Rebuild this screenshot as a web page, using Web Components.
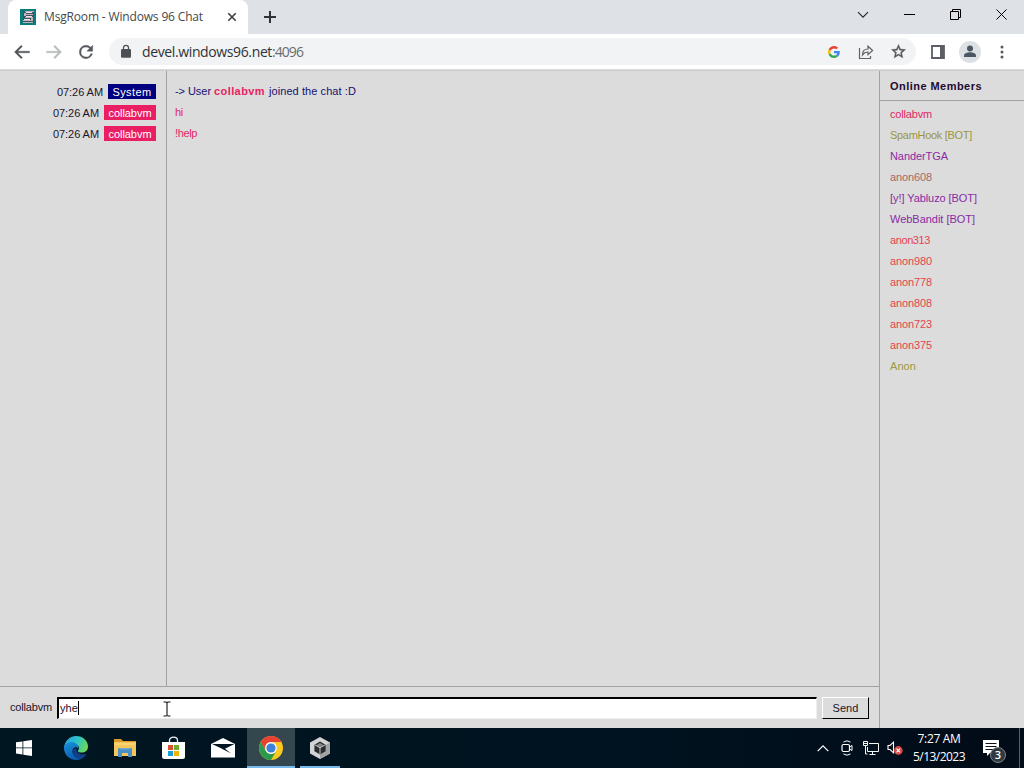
<!DOCTYPE html>
<html lang="en">
<head>
<meta charset="utf-8">
<title>MsgRoom - Windows 96 Chat</title>
<style>
html,body{margin:0;width:1024px;height:768px;overflow:hidden;background:#dcdcdc}
</style>
</head>
<body>
<desktop-screen></desktop-screen>
<script>
function define(name, html, setup) {
  const tpl = document.createElement('template');
  tpl.innerHTML = html;
  customElements.define(name, class extends HTMLElement {
    connectedCallback() {
      if (this.shadowRoot) return;
      const root = this.attachShadow({ mode: 'open' });
      root.appendChild(tpl.content.cloneNode(true));
      if (setup) setup(this, root);
    }
  });
}

/* A text run tracked so that it takes the width given in "w". */
customElements.define('fit-text', class extends HTMLElement {
  connectedCallback() {
    if (this.shadowRoot) return;
    const root = this.attachShadow({ mode: 'open' });
    root.innerHTML = '<style>:host{display:inline-block;white-space:pre;flex:none}span{display:inline-block}</style><span></span>';
    const span = root.querySelector('span');
    const text = this.getAttribute('text');
    span.textContent = text;
    const w = +this.getAttribute('w');
    const natural = span.getBoundingClientRect().width;
    if (w && natural) {
      const gap = (w - natural) / text.length;
      span.style.letterSpacing = gap + 'px';
      this.style.width = w + 'px';
    }
  }
});

const ICONS = {
  site: ['0 0 16 16', '<path fill="#087d7c" d="M0 0h16v16H0z"/><path fill="#3b5564" d="M3 2h11v12H3z"/><path fill="#c9aeba" d="M5 2h9v1H5zM4 4h2v3H4zM6 5h7v1H6zM5 8h8v1H5zM11 9h2v3h-2zM3 11h8v1H3zM3 13h10v1H3z"/><path fill="#eee4ea" d="M6 3h6v1H6zM6 7h6v1H6zM4 10h6v1H4z"/>'],
  close: ['0 0 10 10', '<path d="M1.3 1.3l7.4 7.4M8.7 1.3L1.3 8.7" stroke="#3c4043" stroke-width="1.6" fill="none"/>'],
  plus: ['0 0 12 12', '<path d="M6 0v12M0 6h12" stroke="#303338" stroke-width="2" fill="none"/>'],
  tabs: ['0 0 12 8', '<path d="M1 1.2l5 5 5-5" stroke="#222" stroke-width="1.1" fill="none"/>'],
  min: ['0 0 11 11', '<path d="M0 5.5h11" stroke="#000" fill="none"/>'],
  restore: ['0 0 11 11', '<path d="M.5 2.5h8v8h-8zM2.5 2.5v-2h8v8h-2" stroke="#000" fill="none"/>'],
  x: ['0 0 11 11', '<path d="M.5.5l10 10M10.500.5l-10 10" stroke="#000" fill="none"/>'],
  back: ['0 0 24 24', '<path fill="currentColor" stroke="currentColor" stroke-width=".4" d="M21 11H6.83l5.59-5.59L11 4l-8 8 8 8 1.41-1.41L6.83 13H21z"/>'],
  fwd: ['0 0 24 24', '<path fill="currentColor" stroke="currentColor" stroke-width=".4" d="M3 11h14.170l-5.590-5.590L13 4l8 8-8 8-1.410-1.410L17.170 13H3z"/>'],
  reload: ['0 0 24 24', '<path fill="#55585c" d="M17.650 6.350A7.960 7.960 0 0 0 12 4a8 8 0 1 0 7.730 10h-2.080A6 6 0 1 1 12 6c1.660 0 3.140.69 4.220 1.780L13 11h7V4z" stroke="#55585c" stroke-width=".5"/>'],
  lock: ['0 0 24 24', '<path fill="#4d5155" d="M18 8h-1V6A5 5 0 0 0 7 6v2H6a2 2 0 0 0-2 2v10c0 1.100.9 2 2 2h12a2 2 0 0 0 2-2V10a2 2 0 0 0-2-2zM9 6a3 3 0 0 1 6 0v2H9z"/>'],
  google: ['0 0 48 48', '<path fill="#EA4335" d="M24 9.500c3.540 0 6.710 1.220 9.210 3.600l6.850-6.850C35.900 2.380 30.470 0 24 0 14.620 0 6.510 5.380 2.560 13.220l7.980 6.190C12.430 13.720 17.740 9.500 24 9.500z"/><path fill="#4285F4" d="M46.980 24.550c0-1.570-.15-3.090-.38-4.550H24v9.020h12.940c-.58 2.960-2.260 5.480-4.780 7.180l7.730 6c4.510-4.180 7.090-10.360 7.090-17.650z"/><path fill="#FBBC05" d="M10.530 28.590a14.500 14.500 0 0 1 0-9.180l-7.980-6.190a24 24 0 0 0 0 21.560z"/><path fill="#34A853" d="M24 48c6.480 0 11.930-2.130 15.890-5.810l-7.730-6c-2.150 1.450-4.920 2.300-8.160 2.300-6.260 0-11.570-4.220-13.470-9.910l-7.980 6.190C6.510 42.620 14.620 48 24 48z"/>'],
  share: ['0 0 16 16', '<path d="M1.500 4v10.500h11V12M4.500 11c0-4 2-6 5.500-6V2.200L14.600 6.500 10 10.600V8c-2.500 0-4.200 1-5.500 3z" stroke="#5f6368" stroke-width="1.200" fill="none"/>'],
  star: ['0 0 24 24', '<path fill="#4f5357" d="M22 9.240l-7.190-.62L12 2 9.190 8.630 2 9.240l5.460 4.730L5.820 21 12 17.270 18.180 21l-1.630-7.030zM12 15.400l-3.760 2.270 1-4.280-3.320-2.880 4.380-.38L12 6.100l1.710 4.040 4.380.38-3.320 2.880 1 4.280z" stroke="#4f5357" stroke-width=".5"/>'],
  panel: ['0 0 14 14', '<path d="M1 1h12v12H1z" fill="#fff" stroke="#5b5f63" stroke-width="1.800"/><path d="M9 1h4v12H9z" fill="#5b5f63"/>'],
  avatar: ['0 0 22 22', '<circle cx="11" cy="11" r="11" fill="#dde1e5"/><circle cx="11" cy="7.500" r="3" fill="#4b5863"/><path d="M5 16v-1.500c0-2 3.500-3.200 6-3.200s6 1.200 6 3.200V16z" fill="#4b5863"/>'],
  dots: ['0 0 4 14', '<g fill="#55585c"><circle cx="2" cy="2" r="1.500"/><circle cx="2" cy="7" r="1.500"/><circle cx="2" cy="12" r="1.500"/></g>'],
  windows: ['0 0 16 16', '<path fill="#fff" d="M0 2.300l6.500-.9v6H0zM7.300 1.300L16 0v7.400H7.300zM0 8.300h6.500v6.200L0 13.600zM7.300 8.300H16V16l-8.700-1.300z"/>'],
  edge: ['0 0 24 24', '<defs><linearGradient id="a" x1="0" y1=".2" x2="1" y2=".5"><stop stop-color="#259fe0"/><stop offset=".5" stop-color="#2bc1cc"/><stop offset="1" stop-color="#69d957"/></linearGradient><linearGradient id="b" x1="0" y1="0" x2=".5" y2="1"><stop stop-color="#1993dc"/><stop offset="1" stop-color="#0b58ad"/></linearGradient></defs><path fill="url(#a)" d="M0 12C.5 5 5.500 0 12 0c7 0 12 5 12 10.500 0 4-3 6.100-6.300 6.100-3 0-4.200-1.200-3.600-2.100 1-1.500 1.200-2.900.3-4.200C11.500 6 3.800 6.400 0 12z"/><path fill="url(#b)" d="M0 12c1-5.500 7.300-7.500 11.600-4.700 2.500 1.700 3.300 3.700 2.400 5.100-1.800-2-5-1-5.500 2.200-.7 5 5.200 8.400 10 6.400l2.700-1.200C19.200 22.500 15.800 24 12 24 5.300 24 0 18.600 0 12z"/><path fill="#103f86" d="M8.700 14.500c.7-1.800 2.500-2.600 4-2.200-1.300 4.200 3.800 7.400 9.500 5.400 0 2.500-4 5.200-7.700 4.700-4-.5-6.300-4-5.800-7.900z"/>'],
  folder: ['0 0 22 20', '<path fill="#d99b25" d="M0 1h7l2 2h13v4H0z"/><path fill="#f4c65b" d="M0 4h22v14H0z"/><path fill="#fbd574" d="M1 5h20v2H1z"/><path fill="#4a8fc6" d="M4 11.500c0-1 .8-1.500 1.500-1.500h11c1 0 1.500.7 1.500 1.500V19h-4v-4H8v4H4z"/><path fill="#70a8cf" d="M5.500 10h11l-1 1.400h-9z"/>'],
  store: ['0 0 23 24', '<path d="M7.500 7V4.500C7.500 0 15.500 0 15.500 4.500V7" fill="none" stroke="#eef5f9" stroke-width="1.300"/><path fill="#fff" d="M0 6h23v14.500a2.500 2.500 0 0 1-2.500 2.500h-18A2.500 2.500 0 0 1 0 20.500z"/><path fill="#d9532f" d="M6 9h5v5H6z"/><path fill="#71ad2e" d="M12 9h5v5h-5z"/><path fill="#179fd5" d="M6 15h5v5H6z"/><path fill="#f1b400" d="M12 15h5v5h-5z"/>'],
  mail: ['0 0 24 20', '<path fill="#fff" d="M0 6l12-6 12 6v13.500H0z"/><path fill="#001622" d="M1 6h22.500L14 10.800l6 4.700L9.500 10z"/>'],
  chrome: ['0 0 24 24', '<circle cx="12" cy="12" r="12" fill="#f9c920"/><path fill="#e64335" d="M1.610 6A12 12 0 0 1 22.400 6H12a6 6 0 0 0-5.200 9z"/><path fill="#299b4c" d="M1.610 6A12 12 0 0 0 12 24l5.200-9A6 6 0 0 1 6.800 15z"/><circle cx="12" cy="12" r="5.900" fill="#f5f8fd"/><circle cx="12" cy="12" r="4.600" fill="#3e81dc"/>'],
  cube: ['0 0 20 22', '<path fill="#d4d4d4" d="M10 0l10 5.500v11L10 22 0 16.500v-11z"/><path fill="#a4a4a4" d="M10 11l10-5.500v11L10 22z"/><path fill="#2b2d2f" d="M10 4.500l5.600 3.200v6.600L10 17.500l-5.600-3.200V7.700z"/><path fill="#85888a" d="M10 6l3.800 2.200L10 10.300 6.200 8.200z"/><path stroke="#c9c9c9" fill="none" d="M10 17v-6.200L4.800 7.800M10 10.800l5.200-3"/>'],
  up: ['0 0 12 7', '<path d="M.7 6.200L6 .9l5.300 5.300" fill="none" stroke="#fff" stroke-width="1.200"/>'],
  meet: ['0 0 12 16', '<g fill="none" stroke="#fff"><path d="M2.500 2Q6-.3 9.500 2M2.500 14Q6 16.300 9.500 14"/><rect x="1" y="4.500" width="7.500" height="7" rx="1.500" stroke-width="1.200"/><path d="M8.500 7l2.500-1.500v5L8.500 9"/></g>'],
  net: ['0 0 16 14', '<g fill="none" stroke="#f3f6f8"><path d="M6 2.500h9.500v8H4.500V6M9.500 10.500v3M6.500 13.500h6"/><path d="M.5.500h4v4h-4zM.5 2.500h4M2.500 4.500v8.500h2"/></g>'],
  sound: ['0 0 16 14', '<path d="M1 4.500h2l3.500-3.300v10.600L3 8.500H1z" fill="none" stroke="#fff" stroke-width="1.100"/><circle cx="11.300" cy="9.500" r="4.400" fill="#d54744"/><path d="M9.500 7.700l3.600 3.600M13.100 7.700l-3.600 3.600" stroke="#fff" stroke-width="1.200"/>'],
  note: ['0 0 16 16', '<path fill="#fff" d="M0 0h16v13H7l-3 3v-3H0z"/><path stroke="#061421" stroke-width="1.100" d="M2.500 3.500h11M2.500 6.500h11M2.500 9.500h8"/>'],
  ibeam: ['0 0 8 16', '<path d="M.5 1h2.500l1 .6 1-.6h2.500M4 1.500v13M.5 15h2.500l1-.6 1 .6h2.500" stroke="#111" fill="none" stroke-width="1.100"/>']
};
customElements.define('ui-icon', class extends HTMLElement {
  connectedCallback() {
    if (this.shadowRoot) return;
    const [vb, body] = ICONS[this.getAttribute('name')];
    const w = this.getAttribute('w'), h = this.getAttribute('h') || w;
    this.attachShadow({ mode: 'open' }).innerHTML =
      `<style>:host{display:block;flex:none;width:${w}px;height:${h}px}svg{display:block}</style><svg width="${w}" height="${h}" viewBox="${vb}">${body}</svg>`;
  }
});

define('tab-strip', `<style>
:host{display:flex;height:34px;background:#dee1e6;box-sizing:border-box;padding-left:8px;font:12px "Open Sans","Noto Sans",sans-serif;color:#45484c}
.tab{width:240px;height:34px;box-sizing:border-box;background:#fff;border-radius:8px 8px 0 0;display:flex;align-items:center;padding:0 11px 1px 12px}
.tab fit-text{margin-left:8px}
.tab .c{margin-left:auto}
.new{margin:11px 0 0 16px}
.win{margin-left:auto;display:flex;height:29px}
.win span{width:46px;display:flex;align-items:center;justify-content:center}
</style>
<div class="tab"><ui-icon name="site" w="16"></ui-icon><fit-text text="MsgRoom - Windows 96 Chat" w="159"></fit-text><ui-icon class="c" name="close" w="10"></ui-icon></div>
<ui-icon class="new" name="plus" w="12"></ui-icon>
<div class="win"><span><ui-icon name="tabs" w="12" h="8"></ui-icon></span><span><ui-icon name="min" w="11"></ui-icon></span><span><ui-icon name="restore" w="11"></ui-icon></span><span><ui-icon name="x" w="11"></ui-icon></span></div>`);

define('nav-bar', `<style>
:host{display:flex;align-items:center;height:36px;box-sizing:border-box;background:#fff;border-bottom:1px solid #dadada;padding:0 6px;font:14px "Open Sans","Noto Sans",sans-serif;color:#303236}
.b{width:32px;display:flex;justify-content:center;color:#4f5256}
.off{color:#b6b8ba}
.box{width:807px;height:27px;margin:0 6px 0 7px;box-sizing:border-box;border-radius:14px;background:#f1f3f4;display:flex;align-items:center;padding:0 2px 0 9px}
.box>ui-icon{margin-right:8px}
.port{color:#696d71}
.r{margin-left:auto;display:flex;align-items:center}
</style>
<span class="b"><ui-icon name="back" w="20"></ui-icon></span><span class="b off"><ui-icon name="fwd" w="20"></ui-icon></span><span class="b"><ui-icon name="reload" w="20"></ui-icon></span>
<div class="box"><ui-icon name="lock" w="16" h="15"></ui-icon><fit-text text="devel.windows96.net" w="130"></fit-text><fit-text class="port" text=":4096" w="31"></fit-text>
<div class="r"><span class="b"><ui-icon name="google" w="12"></ui-icon></span><span class="b"><ui-icon name="share" w="16"></ui-icon></span><span class="b"><ui-icon name="star" w="17"></ui-icon></span></div></div>
<span class="b"><ui-icon name="panel" w="14"></ui-icon></span><span class="b"><ui-icon name="avatar" w="22"></ui-icon></span><span class="b"><ui-icon name="dots" w="4" h="14"></ui-icon></span>`);

define('chat-stamp', `<style>
:host{display:flex;justify-content:flex-end;align-items:center;height:21px}
.tag{height:15px;display:flex;align-items:center;justify-content:center;color:#fff;margin-left:5px}
</style><fit-text text="07:26 AM" w="46"></fit-text><span class="tag"></span>`, (el, root) => {
  const t = root.querySelector('.tag');
  const sys = el.getAttribute('user') === 'System';
  t.style.background = sys ? '#000080' : '#e91e63';
  t.style.width = sys ? '48px' : '52px';
  t.innerHTML = `<fit-text text="${el.getAttribute('user')}" w="${sys ? 39 : 43}"></fit-text>`;
});

define('chat-log', `<style>
:host{display:flex;height:615px}
.l{width:166px;box-sizing:border-box;padding:10px 10px 0 0}
.m{flex:1;border-left:1px solid #a2a2a2;padding:9px 0 0 8px;color:#e02a62}
.m div{display:flex;height:21px;align-items:center}
.m .sys{color:#17106f}
b{color:#e91e63;margin:0 4px 0 3px}
</style>
<div class="l"><chat-stamp user="System"></chat-stamp><chat-stamp user="collabvm"></chat-stamp><chat-stamp user="collabvm"></chat-stamp></div>
<div class="m"><div class="sys"><fit-text text="-&gt; User" w="36"></fit-text><b><fit-text text="collabvm" w="51"></fit-text></b><fit-text text="joined the chat :D" w="87"></fit-text></div><div><fit-text text="hi" w="8"></fit-text></div><div><fit-text text="!help" w="22"></fit-text></div></div>`);

define('chat-input', `<style>
:host{display:flex;height:42px;box-sizing:border-box;border-top:1px solid #a2a2a2;padding:10px 10px 0 10px;color:#21142a}
.n{margin:3px 5px 0 0}
.f{width:760px;height:22px;box-sizing:border-box;background:#fff;border:2px solid;border-color:#000 #eee #eee #000;border-right-width:1px;border-bottom-width:1px;display:flex;align-items:center;padding:0 0 1px 1px;position:relative}
.caret{width:1px;height:14px;background:#000}
.f ui-icon{position:absolute;left:104px;top:2px}
.s{width:47px;height:22px;margin-left:5px;box-sizing:border-box;border:1px solid;border-color:#fff #000 #000 #fff;background:#dcdcdc;display:flex;align-items:center;justify-content:center}
</style>
<fit-text class="n" text="collabvm" w="42"></fit-text><div class="f"><fit-text text="yhe" w="18"></fit-text><span class="caret"></span><ui-icon name="ibeam" w="8" h="16"></ui-icon></div><div class="s"><fit-text text="Send" w="26"></fit-text></div>`);

define('member-list', `<style>
:host{display:block;width:145px;box-sizing:border-box;border-left:1px solid #a2a2a2}
h2{margin:0;height:30px;box-sizing:border-box;border-bottom:1px solid #a2a2a2;padding:0 0 0 10px;display:flex;align-items:center;font-size:11px;font-weight:bold;color:#230b30}
ul{list-style:none;margin:0;padding:2px 0 0 10px}
li{height:21px;display:flex;align-items:center}
</style><h2><fit-text text="Online Members" w="92"></fit-text></h2><ul></ul>`, (el, root) => {
  root.querySelector('ul').innerHTML = [
    ['collabvm', 42, '#e02862'], ['SpamHook [BOT]', 82, '#9b9641'], ['NanderTGA', 58, '#892aa4'],
    ['anon608', 42, '#a86767'], ['[y!] Yabluzo [BOT]', 87, '#892aa4'], ['WebBandit [BOT]', 85, '#892aa4'],
    ['anon313', 40, '#e54450'], ['anon980', 42, '#e54450'], ['anon778', 42, '#e54450'],
    ['anon808', 42, '#e54450'], ['anon723', 42, '#e54450'], ['anon375', 42, '#e54450'], ['Anon', 26, '#999943']
  ].map(([n, w, c]) => `<li style="color:${c}"><fit-text text="${n}" w="${w}"></fit-text></li>`).join('');
});

define('msg-room', `<style>
:host{display:flex;height:658px;box-sizing:border-box;border-top:1px solid #cecece;background:#dcdcdc;font:11px/14px "Liberation Sans",Arial,sans-serif;color:#21142a}
.main{width:879px}
</style><div class="main"><chat-log></chat-log><chat-input></chat-input></div><member-list></member-list>`);

define('task-bar', `<style>
:host{display:flex;height:40px;background:linear-gradient(90deg,#001621,#001320 60%,#020b18);font:12px/18px "Open Sans","Noto Sans",sans-serif;color:#fff}
.a{width:49px;box-sizing:border-box;display:flex;align-items:center;justify-content:center}
.start{width:51px;padding-right:3px}
.on{width:48px;margin-right:1px;background:#34474f;box-shadow:inset 0 -2px #76b9ed}
.run{width:40px;margin-left:4px;box-shadow:inset 0 -2px #76b9ed}
.tray{margin-left:auto;display:flex;align-items:center}
.time{width:62px;margin:0 0 0 5px;display:flex;flex-direction:column;align-items:center}
.n{position:relative;margin:0 20px 0 13px}
.badge{position:absolute;left:7px;top:7px;width:16px;height:16px;box-sizing:border-box;border-radius:50%;border:1px solid #7c848a;background:#303940;font:600 11px/14px "Open Sans",sans-serif;text-align:center}
.end{width:1px;height:40px;background:#59616a;margin-right:4px}
</style>
<span class="a start"><ui-icon name="windows" w="16"></ui-icon></span><span class="a"><ui-icon name="edge" w="24"></ui-icon></span><span class="a"><ui-icon name="folder" w="22" h="20"></ui-icon></span><span class="a"><ui-icon name="store" w="23" h="24"></ui-icon></span><span class="a"><ui-icon name="mail" w="24" h="20"></ui-icon></span><span class="a on"><ui-icon name="chrome" w="24"></ui-icon></span><span class="a run"><ui-icon name="cube" w="20" h="22"></ui-icon></span>
<div class="tray"><ui-icon name="up" w="12" h="7"></ui-icon><ui-icon name="meet" w="12" h="16" style="margin-left:12px"></ui-icon><ui-icon name="net" w="16" h="14" style="margin-left:10px"></ui-icon><ui-icon name="sound" w="16" h="14" style="margin-left:8px"></ui-icon>
<div class="time"><fit-text text="7:27 AM" w="43"></fit-text><fit-text text="5/13/2023" w="52"></fit-text></div>
<div class="n"><ui-icon name="note" w="16"></ui-icon><span class="badge">3</span></div><span class="end"></span></div>`);

define('desktop-screen', `<style>:host{display:flex;flex-direction:column;width:1024px;height:768px;overflow:hidden}</style>
<tab-strip></tab-strip><nav-bar></nav-bar><msg-room></msg-room><task-bar></task-bar>`);
</script>
</body>
</html>
